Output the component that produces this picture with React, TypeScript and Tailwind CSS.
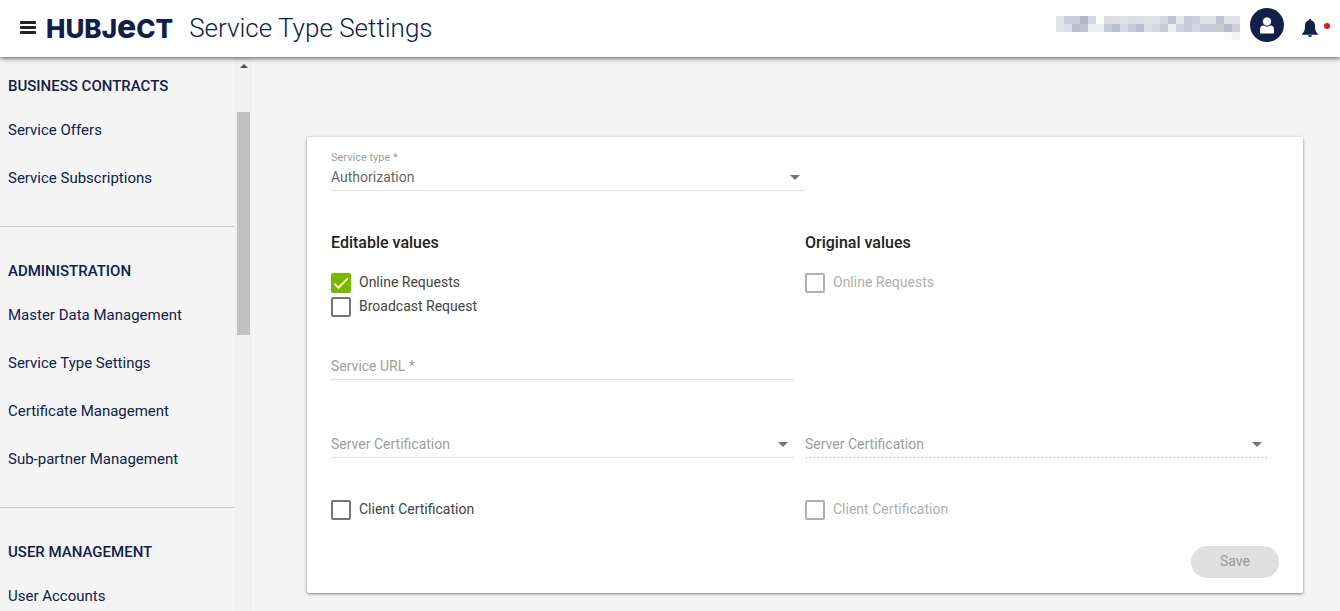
import React, { useState } from 'react';

interface NavSection {
  title: string;
  items: string[];
}

const sections: NavSection[] = [
  { title: 'BUSINESS CONTRACTS', items: ['Service Offers', 'Service Subscriptions'] },
  {
    title: 'ADMINISTRATION',
    items: ['Master Data Management', 'Service Type Settings', 'Certificate Management', 'Sub-partner Management'],
  },
  { title: 'USER MANAGEMENT', items: ['User Accounts'] },
];

// Shades of the censored user name, one row of blocks per line
const nameBlocks: string[][] = [
  ['#e3e4ea', '#cacddb', '#cacddb', '#b1b7c9', '#d4d7e2', '', '#dcdce2', '#dfdfe5', '#e0e1e6', '#dcdde4', '#dfdfe5', '#e0e1e6', '#e0e1e6', '#d4d7e0', '#c0c4d3', '#e6e7ec', '#c9ccda', '#cdd0dc', '#e0e1e7', '#e0e1e7', '#c0c4d3', '#dfe1e7', '#dfe1e7', '#e3e4e9'],
  ['#e3e4ea', '#dbdee4', '#b8bccd', '#c0c4d3', '#eceef3', '#eceef3', '#c9ccda', '#b8bccd', '#d8dae3', '#c9ccda', '#b8bccd', '#dfe0e7', '#d4d7e0', '#c9ccd6', '#eceef3', '#d0d3de', '#c6cad4', '#d4d7e0', '#c6cad6', '#c6cad6', '#c9ccd6', '#b8bac8', '#cdd0dc'],
  ['', '', '', '', '', '', '', '', '', '', '', '', '', '', '', '', '', '', '', '', '', '#fafafb', '#f3f3f5'],
];

const RedactedName: React.FC = () => (
  <svg width="184" height="24" viewBox="0 0 184 24" shapeRendering="crispEdges" aria-hidden="true">
    {nameBlocks.map((row, y) =>
      row.map((fill, x) => (fill ? <rect key={`${x}-${y}`} x={x * 8} y={y * 8} width="8" height="8" fill={fill} /> : null))
    )}
  </svg>
);

// --- HEADER ---

const Header: React.FC = () => (
  <header className="relative z-10 h-[57px] shrink-0 bg-white flex items-center pl-5 pr-[10px] pb-[2px] shadow-[0_1px_5px_rgba(0,0,0,0.7)]">
    <button type="button" aria-label="Menu" className="w-4 h-4">
      <svg width="16" height="16" viewBox="0 0 16 16" fill="#222" aria-hidden="true">
        <rect x="0" y="1" width="16" height="3" rx="1" />
        <rect x="0" y="6" width="16" height="3" rx="1" />
        <rect x="0" y="11" width="16" height="3" rx="1" />
      </svg>
    </button>
    <a href="#home" className="ml-[10px] flex items-baseline font-['Inter',sans-serif] font-extrabold text-[26px] leading-8 text-[#10204b]">
      HUBJ<span className="text-[32px] leading-8">e</span>CT
    </a>
    <h1 className="ml-4 text-[26px] leading-8 font-light text-[#10204b]">Service Type Settings</h1>
    <div className="ml-auto flex items-center">
      <RedactedName />
      <button type="button" aria-label="Account" className="ml-[10px] mb-[6px]">
        <svg width="34" height="34" viewBox="0 0 34 34" aria-hidden="true">
          <circle cx="17" cy="17" r="17" fill="#10204b" />
          <path d="M10 24.5v-3.200c0-2.500 1.300-3.800 3.300-3.800h7.400c2 0 3.300 1.300 3.300 3.800v3.200c0 .7-.5 1-1 1H11c-.5 0-1-.3-1-1z" fill="#fff" />
          <circle cx="17" cy="13.500" r="4.600" fill="#fff" stroke="#10204b" strokeWidth="1" />
        </svg>
      </button>
      <button type="button" aria-label="Notifications" className="ml-[18px] flex items-center gap-[6px]">
        <svg width="16" height="18" viewBox="0 0 16 18" fill="#10204b" aria-hidden="true">
          <path d="M8 0c.8 0 1.200.5 1.200 1.200C11.800 1.800 13 4 13 6.500c0 4.500.8 6.500 3 8.500v.7H0V15c2.200-2 3-4 3-8.500C3 4 4.200 1.800 6.800 1.200 6.800.5 7.200 0 8 0z" />
          <path d="M6 16.200h4c-.2 1-.9 1.800-2 1.800s-1.800-.8-2-1.800z" />
        </svg>
        <span className="w-[6px] h-[6px] mb-1 rounded-full bg-[#ee1111]" />
      </button>
    </div>
  </header>
);

// --- SIDEBAR ---

const Sidebar: React.FC = () => (
  <aside className="w-[252px] shrink-0 flex overflow-hidden text-[15px] text-[#10204b]">
    <nav className="flex-1 min-w-0 overflow-hidden">
      {sections.map((section, index) => (
        <section key={section.title} className={`pb-6 border-b border-[#cccccc] ${index === 0 ? 'pt-[9px]' : 'pt-6'}`}>
          <h2 className="h-10 px-2 flex items-center font-medium">{section.title}</h2>
          {section.items.map(item => (
            <a key={item} href="#nav" className="h-12 px-2 flex items-center">{item}</a>
          ))}
        </section>
      ))}
    </nav>
    <div className="w-[17px] bg-[#f0f0f0] flex flex-col items-center" aria-hidden="true">
      <svg width="8" height="4" viewBox="0 0 8 4" className="mt-[7px]" fill="#505050">
        <path d="M0 4L4 0l4 4z" />
      </svg>
      <div className="mt-11 w-[13px] h-[223px] bg-[#c1c1c1]" />
    </div>
  </aside>
);

// --- FORM CONTROLS ---

interface SelectFieldProps {
  id: string;
  label: string;
  options: string[];
  placeholder?: boolean;
  disabled?: boolean;
}

const SelectField: React.FC<SelectFieldProps> = ({ id, label, options, placeholder, disabled }) => (
  <div className="relative">
    <select
      id={id}
      aria-label={label}
      disabled={disabled}
      className={`block w-full h-7 appearance-none border-b text-sm outline-none disabled:opacity-100 ${placeholder ? 'text-[#9e9e9e]' : 'text-[#666666]'} ${disabled ? 'border-transparent bg-[linear-gradient(to_right,#949494_25%,transparent_25%)] bg-[length:4px_1px] bg-repeat-x bg-bottom bg-origin-border' : 'border-[#dddddd] bg-transparent'}`}
    >
      {placeholder && <option>{label}</option>}
      {options.map(option => <option key={option}>{option}</option>)}
    </select>
    <svg width="10" height="5" viewBox="0 0 10 5" fill="#757575" className="absolute right-[5px] top-3 pointer-events-none" aria-hidden="true">
      <path d="M0 0h10L5 5z" />
    </svg>
  </div>
);

interface CheckFieldProps {
  label: string;
  defaultChecked?: boolean;
  disabled?: boolean;
}

const CheckField: React.FC<CheckFieldProps> = ({ label, defaultChecked = false, disabled }) => {
  const [checked, setChecked] = useState(defaultChecked);

  return (
    <label className={`h-6 flex items-start gap-2 text-sm ${disabled ? 'text-[#b0b0b0]' : 'text-[#444444]'}`}>
      <span className="relative mt-[2px] w-5 h-5">
        <input
          type="checkbox"
          checked={checked}
          disabled={disabled}
          onChange={e => setChecked(e.target.checked)}
          className="block w-5 h-5 appearance-none rounded-xs border-2 border-[#757575] checked:border-[#7ab800] checked:bg-[#7ab800] disabled:border-[#b0b0b0]"
        />
        {checked && (
          <svg width="20" height="20" viewBox="0 0 24 24" className="absolute inset-0 pointer-events-none" fill="none" stroke="#fff" strokeWidth="2.200" aria-hidden="true">
            <path d="M4 12.700L9 17.700 20.300 6.400" />
          </svg>
        )}
      </span>
      <span className="leading-[22px]">{label}</span>
    </label>
  );
};

// --- SETTINGS CARD ---

const SettingsCard: React.FC = () => (
  <form className="bg-white rounded-xs px-6 py-[15px] shadow-[0_1px_3px_rgba(0,0,0,0.5)]">
    <div className="w-1/2">
      <label htmlFor="service-type" className="block h-[11px] text-[11px] leading-3 text-[#9e9e9e]">Service type *</label>
      <SelectField id="service-type" label="Service type" options={['Authorization', 'Reservation']} />
    </div>

    <div className="mt-10 grid grid-cols-2 text-base leading-6 font-medium text-[#222222]">
      <h2>Editable values</h2>
      <h2>Original values</h2>
    </div>

    <div className="mt-4 grid grid-cols-2">
      <div>
        <CheckField label="Online Requests" defaultChecked />
        <CheckField label="Broadcast Request" />
      </div>
      <CheckField label="Online Requests" disabled />
    </div>

    <div className="mt-[33px] w-1/2 pr-3">
      <input
        type="text"
        aria-label="Service URL"
        placeholder="Service URL *"
        className="block w-full h-7 border-b border-[#dddddd] text-sm outline-none placeholder:text-[#9e9e9e]"
      />
    </div>

    <div className="mt-[50px] grid grid-cols-2">
      <div className="pr-3">
        <SelectField id="server-cert" label="Server Certification" options={['Hubject']} placeholder />
      </div>
      <div className="pr-3">
        <SelectField id="server-cert-original" label="Server Certification" options={[]} placeholder disabled />
      </div>
    </div>

    <div className="mt-10 grid grid-cols-2">
      <CheckField label="Client Certification" />
      <CheckField label="Client Certification" disabled />
    </div>

    <div className="mt-6 flex justify-end">
      <button type="submit" disabled className="w-[88px] h-8 pb-[2px] rounded-full bg-[#e0e0e0] text-sm text-[#999999]">Save</button>
    </div>
  </form>
);

const App: React.FC = () => (
  <div className="h-screen flex flex-col overflow-hidden bg-[#f4f4f4] font-['Roboto',sans-serif]">
    <Header />
    <div className="flex-1 min-h-0 flex">
      <Sidebar />
      <main className="flex-1 min-w-0 overflow-hidden pt-20 pl-[55px] pr-[37px]">
        <SettingsCard />
      </main>
    </div>
  </div>
);

export default App;
